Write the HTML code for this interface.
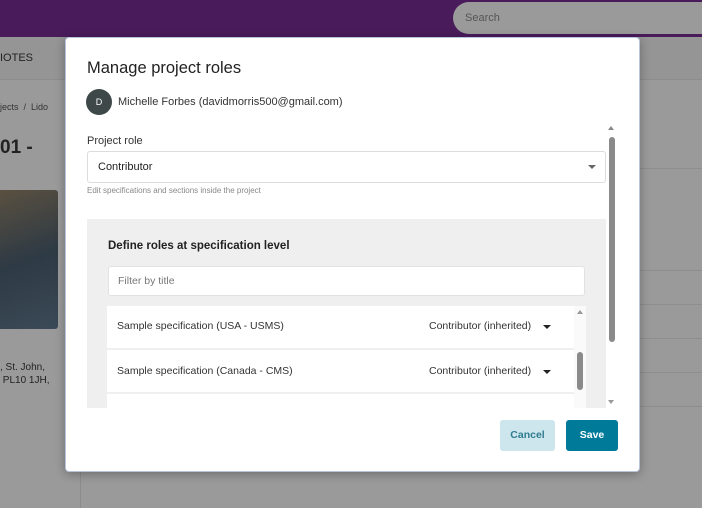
<!DOCTYPE html>
<html><head><style>
*{box-sizing:border-box;margin:0;padding:0}
body{width:702px;height:508px;overflow:hidden;background:#9a9a9a;font-family:"Liberation Sans",sans-serif;position:relative}
.abs{position:absolute}
</style></head><body>
<div class="abs" style="left:0;top:0;width:702px;height:37px;background:#4a1b5b"></div>
<div class="abs" style="left:453px;top:2px;width:249px;height:32px;background:#9a9a9a;border-radius:16px 0 0 16px;font-size:11px;color:#555;padding:10px 0 0 12px">Search</div>
<div class="abs" style="left:0;top:37px;width:702px;height:43px;background:#959595;border-bottom:1px solid #8d8d8d"></div>
<div class="abs" style="left:0;top:52px;font-size:11px;color:#222">IOTES</div>
<div class="abs" style="left:0;top:102px;font-size:9px;color:#333">jects &nbsp;/ &nbsp;Lido</div>
<div class="abs" style="left:0;top:137px;font-size:19px;font-weight:bold;color:#222">01 -</div>
<div class="abs" style="left:0;top:190px;width:58px;height:139px;background:linear-gradient(160deg,#5a5040,#2e3a44 50%,#3b4a58);border-radius:0 3px 3px 0"></div>
<div class="abs" style="left:0;top:361px;font-size:10px;color:#222;line-height:13px">, St. John,<br>&nbsp;PL10 1JH,</div>
<div class="abs" style="left:80px;top:80px;width:1px;height:428px;background:#8c8c8c"></div>
<div class="abs" style="left:640px;top:168px;width:62px;height:1px;background:#8e8e8e"></div>
<div class="abs" style="left:640px;top:270px;width:62px;height:1px;background:#8e8e8e"></div>
<div class="abs" style="left:640px;top:304px;width:62px;height:1px;background:#8e8e8e"></div>
<div class="abs" style="left:640px;top:338px;width:62px;height:1px;background:#8e8e8e"></div>
<div class="abs" style="left:640px;top:372px;width:62px;height:1px;background:#8e8e8e"></div>
<div class="abs" style="left:640px;top:406px;width:62px;height:1px;background:#8e8e8e"></div>

<div class="abs" style="left:65px;top:37px;width:575px;height:435px;background:#fff;border-radius:4px;box-shadow:0 2px 10px rgba(0,0,0,.3);border:1px solid #b8c4dc"></div>
<div class="abs" style="left:87px;top:59px;font-size:16.5px;color:#222">Manage project roles</div>
<div class="abs" style="left:86px;top:89px;width:26px;height:26px;border-radius:50%;background:#3e4848;color:#fff;font-size:9px;text-align:center;line-height:26px">D</div>
<div class="abs" style="left:118px;top:96px;font-size:11px;color:#333">Michelle Forbes (davidmorris500@gmail.com)</div>
<div class="abs" style="left:87px;top:135px;font-size:11px;color:#333">Project role</div>
<div class="abs" style="left:87px;top:151px;width:519px;height:32px;border:1px solid #dcdcdc;border-radius:3px;font-size:11px;color:#222;padding:9px 0 0 10px">Contributor</div>
<div class="abs" style="left:588px;top:165px;border:4px solid transparent;border-top:4px solid #666;border-bottom:0"></div>
<div class="abs" style="left:87px;top:186px;font-size:8px;color:#888">Edit specifications and sections inside the project</div>
<div class="abs" style="left:87px;top:219px;width:519px;height:189px;background:#efefef"></div>
<div class="abs" style="left:108px;top:240px;font-size:11.5px;font-weight:bold;color:#222">Define roles at specification level</div>
<div class="abs" style="left:108px;top:266px;width:477px;height:30px;background:#fff;border:1px solid #e2e2e2;border-radius:3px;font-size:10.5px;color:#777;padding:8px 0 0 9px">Filter by title</div>
<div class="abs" style="left:107px;top:306px;width:467px;height:42px;background:#fff"></div>
<div class="abs" style="left:107px;top:350px;width:467px;height:42px;background:#fff"></div>
<div class="abs" style="left:107px;top:394px;width:467px;height:14px;background:#fff"></div>
<div class="abs" style="left:574px;top:306px;width:12px;height:102px;background:#fafafa"></div>
<div class="abs" style="left:117px;top:320px;font-size:10.5px;color:#333">Sample specification (USA - USMS)</div>
<div class="abs" style="left:117px;top:365px;font-size:10.5px;color:#333">Sample specification (Canada - CMS)</div>
<div class="abs" style="left:429px;top:320px;font-size:10.5px;color:#333">Contributor (inherited)</div>
<div class="abs" style="left:429px;top:365px;font-size:10.5px;color:#333">Contributor (inherited)</div>
<div class="abs" style="left:543px;top:325px;border:4px solid transparent;border-top:4px solid #222;border-bottom:0"></div>
<div class="abs" style="left:543px;top:370px;border:4px solid transparent;border-top:4px solid #222;border-bottom:0"></div>
<div class="abs" style="left:577px;top:310px;border:3px solid transparent;border-bottom:4px solid #999;border-top:0"></div>
<div class="abs" style="left:577px;top:352px;width:6px;height:38px;background:#8a8a8a;border-radius:3px"></div>
<div class="abs" style="left:608px;top:126px;border:3px solid transparent;border-bottom:4px solid #888;border-top:0"></div>
<div class="abs" style="left:609px;top:137px;width:6px;height:205px;background:#8a8a8a;border-radius:3px"></div>
<div class="abs" style="left:608px;top:400px;border:3px solid transparent;border-top:4px solid #999;border-bottom:0"></div>
<div class="abs" style="left:500px;top:420px;width:55px;height:31px;background:#cde5ed;border-radius:3px;font-size:10.5px;font-weight:bold;color:#2f7c90;text-align:center;line-height:31px">Cancel</div>
<div class="abs" style="left:566px;top:420px;width:52px;height:31px;background:#007a99;border-radius:3px;font-size:10.5px;font-weight:bold;color:#fff;text-align:center;line-height:31px">Save</div>
</body></html>
